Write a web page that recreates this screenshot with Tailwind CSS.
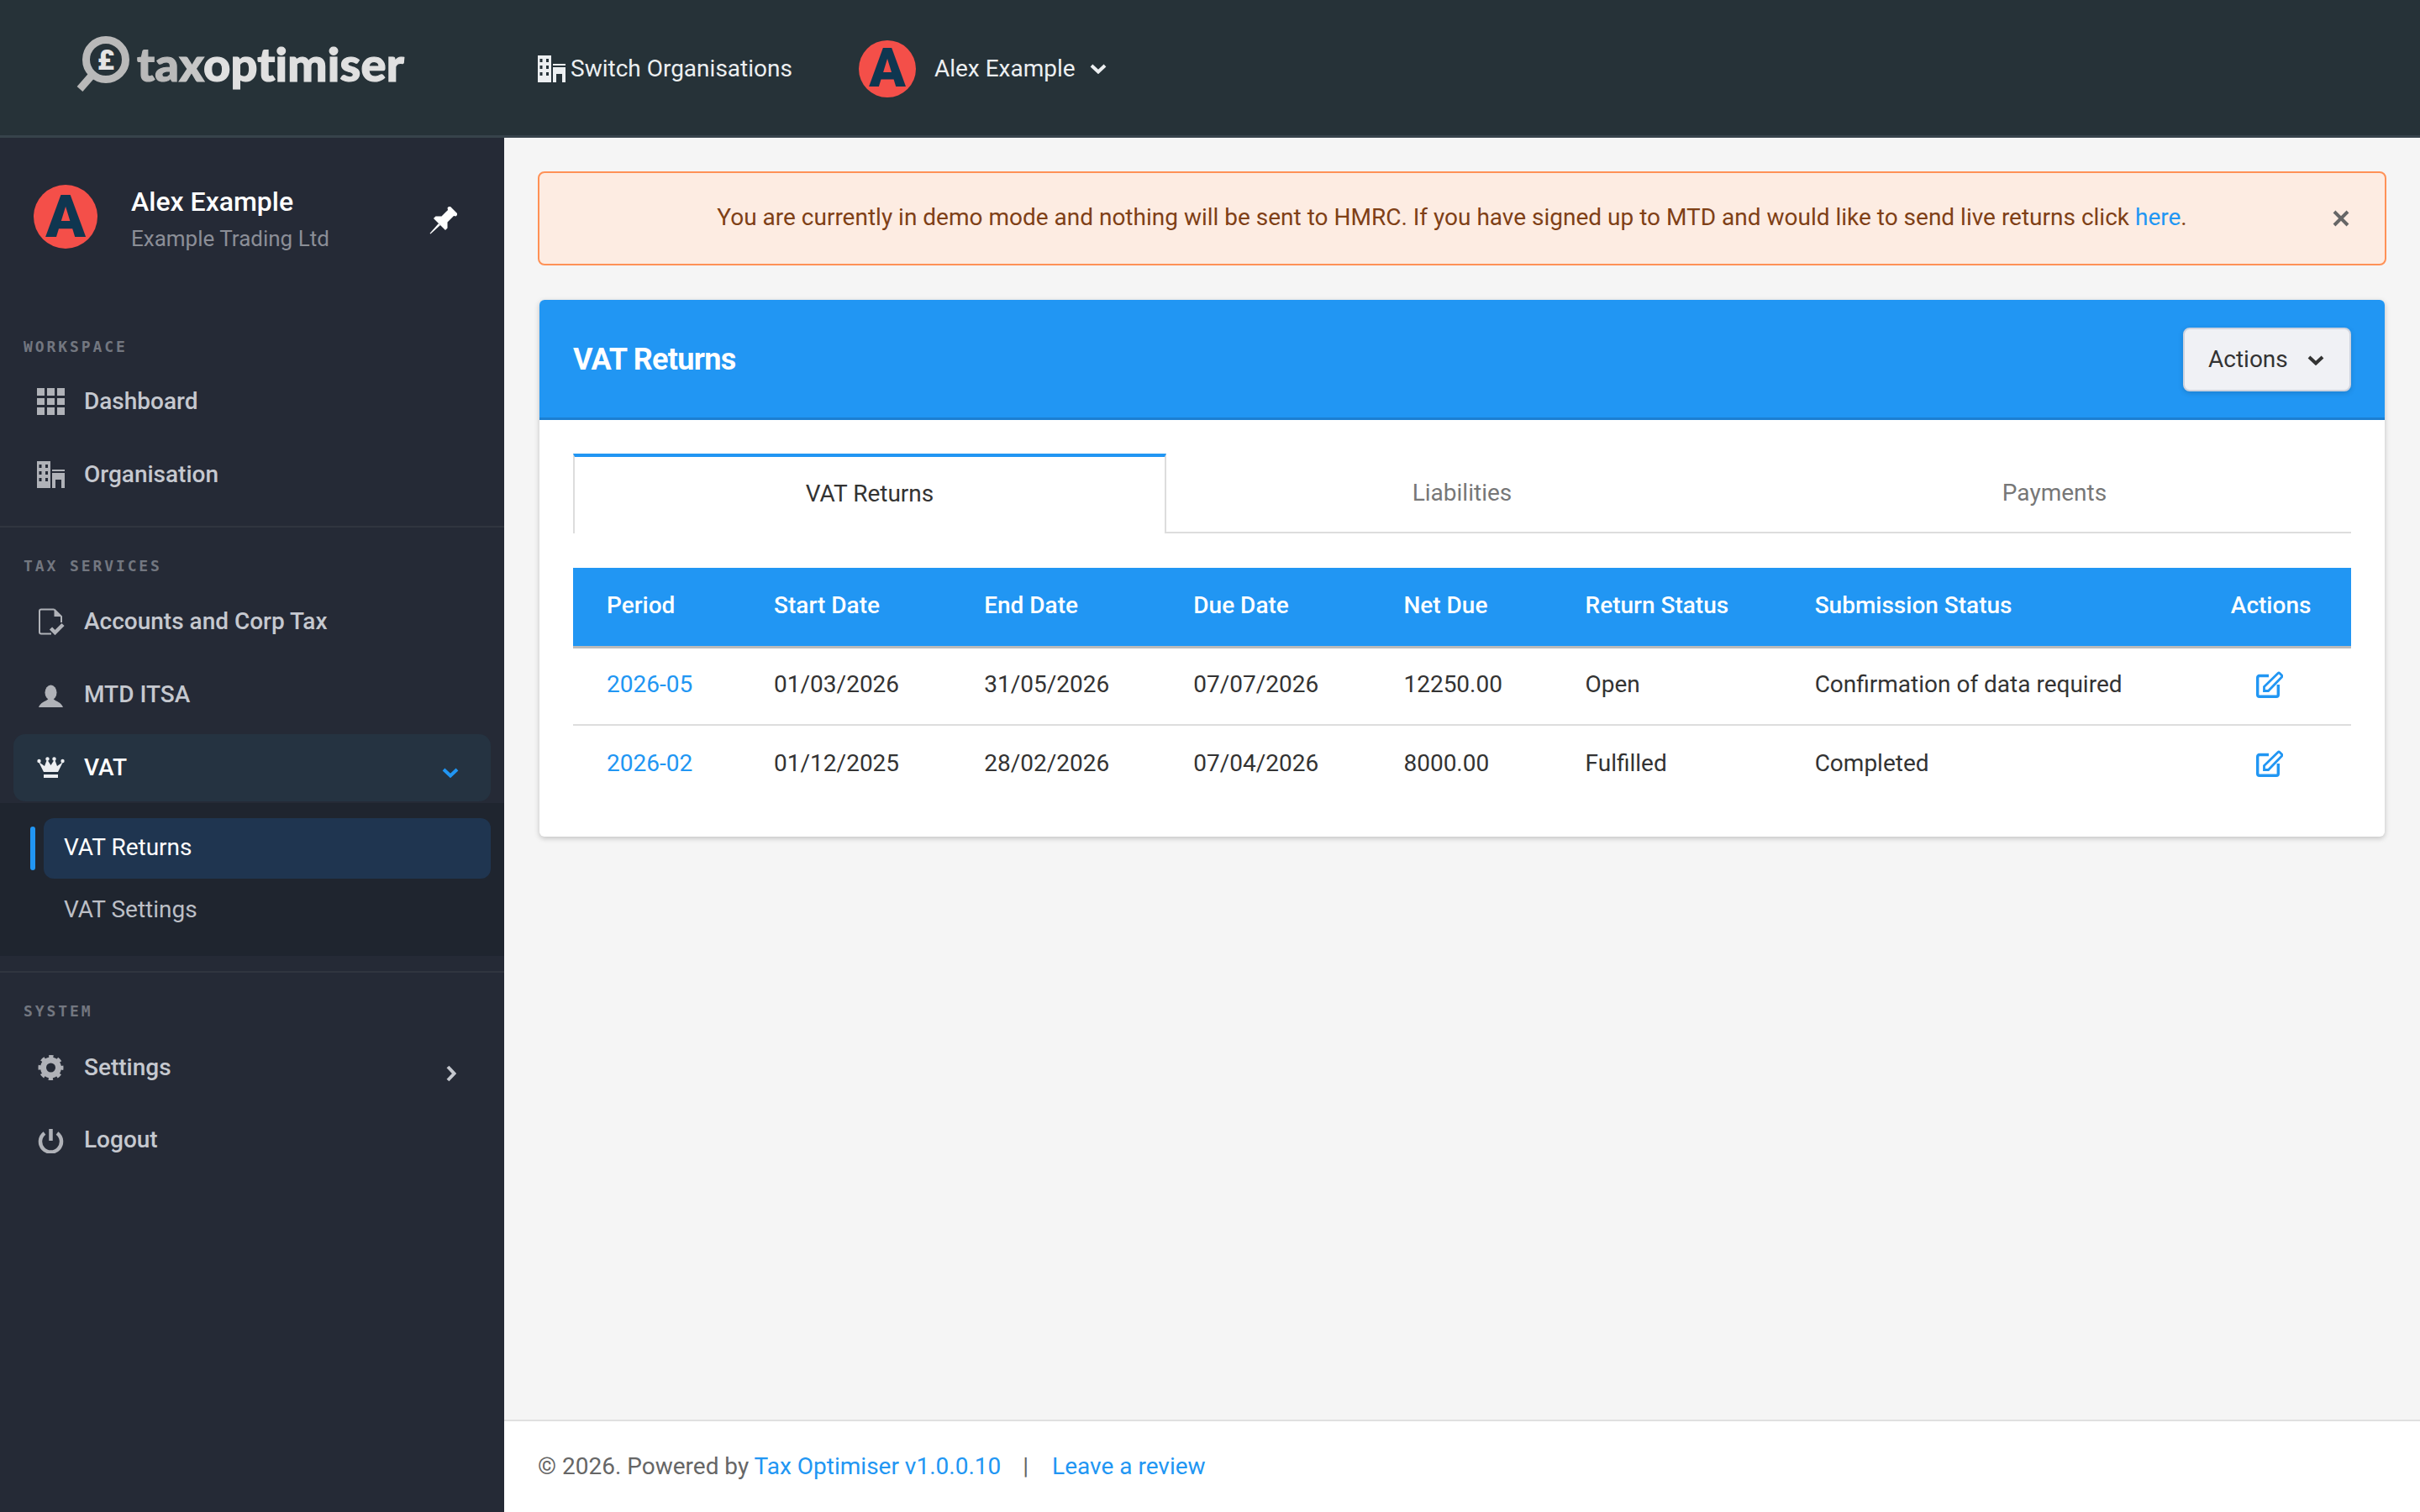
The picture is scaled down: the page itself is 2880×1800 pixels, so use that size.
<!DOCTYPE html>
<html lang="en">
<head>
  <meta charset="UTF-8">
  <title>VAT Returns - Tax Optimiser</title>
  <script src="https://cdn.jsdelivr.net/npm/@tailwindcss/browser@4"></script>
</head>
<body class="font-['Roboto',sans-serif] text-[28px] bg-[#f5f5f5] text-[#333]">
<div class="flex flex-col h-[1800px] w-[2880px] overflow-hidden">

  <!-- top bar -->
  <header class="flex items-center h-[164px] shrink-0 bg-[#263238] border-b-[3px] border-[#37434b] pt-[2px]">
    <div class="flex items-center w-[640px] pl-[90px] -mt-[12px] shrink-0">
      <svg width="64" height="66" viewBox="0 0 64 66" class="shrink-0">
        <circle cx="36" cy="28" r="23.500" fill="none" stroke="#b9b9b9" stroke-width="9"/>
        <path d="M19 47 L5 63" stroke="#b9b9b9" stroke-width="9" fill="none"/>
        <text x="36" y="40" text-anchor="middle" font-family="Roboto" font-weight="900" font-size="34" fill="#e4e4e4">£</text>
      </svg>
      <span class="ml-[9px] font-['Lato',sans-serif] font-black text-[56px] leading-none tracking-[0.2px] [-webkit-text-stroke:1.2px_currentColor] text-[#e0e0e0]"><span class="text-[#b9b9b9]">ta</span><span class="text-[#c6c6c6]">x</span>optimiser</span>
    </div>
    <a class="flex items-center text-[#eceff1]">
      <svg width="33" height="32" viewBox="0 0 33 32" fill="#eceff1" fill-rule="evenodd"><path d="M0 0H16V32H0Z M2.500 4V8H5.500V4Z M10 4V8H13V4Z M2.500 12V16H5.500V12Z M10 12V16H13V12Z M2.500 20V24H5.500V20Z M10 20V24H13V20Z"/><path d="M18 10H33V12H18Z M18 14H33V32H29V22H22V32H18Z"/></svg>
      <span class="ml-[6px]">Switch Organisations</span>
    </a>
    <a class="flex items-center ml-[79px] text-[#eceff1]">
      <span class="flex items-center justify-center w-[68px] h-[68px] rounded-full bg-[#f44f49] text-[#0f3650] font-black text-[64px] leading-none">A</span>
      <span class="ml-[22px]">Alex Example</span>
      <svg width="20" height="12" viewBox="0 0 20 12" class="ml-[17px]" fill="none" stroke="#eceff1" stroke-width="4"><path d="M2 2 L10 9.500 L18 2"/></svg>
    </a>
  </header>

  <div class="flex flex-1 min-h-0">
    <!-- sidebar -->
    <aside class="w-[600px] shrink-0 bg-[#252a36] flex flex-col">
      <div class="flex items-start h-[238px] pt-[56px] pl-[40px] shrink-0">
        <span class="flex items-center justify-center w-[76px] h-[76px] rounded-full bg-[#f44f49] text-[#0f3650] font-black text-[70px] leading-none shrink-0">A</span>
        <div class="ml-[40px] w-[354px]">
          <div class="text-[32px] leading-[40px] font-medium text-white">Alex Example</div>
          <div class="text-[26px] leading-[32px] mt-[8px] text-[#8b8e97]">Example Trading Ltd</div>
        </div>
        <svg width="34" height="34" viewBox="0 0 24 24" fill="#fff" class="mt-[26px]"><g transform="rotate(45 12 12)"><path d="M7 -1H17V1.500L15.500 2.500V10L19 13.500V16H5V13.500L8.500 10V2.500L7 1.500Z"/><path d="M11 16H13L12.400 27H11.600Z"/></g></svg>
      </div>

      <div class="pl-[28px] h-[20px] leading-[22px] mb-[16px] font-['DejaVu_Sans_Mono',monospace] font-bold text-[18px] tracking-[2.900px] text-[#737780]">WORKSPACE</div>
      <nav class="flex flex-col gap-[7px] mx-[16px]">
        <a class="flex items-center h-[80px] pl-[28px] font-medium text-[#c5c8cf]">
          <svg width="33" height="32" viewBox="0 0 33 32" fill="#b0b2b8" class="mr-[23px]"><path d="M0 0H9V9H0Z M12 0H21V9H12Z M24 0H33V9H24Z M0 12H9V20H0Z M12 12H21V20H12Z M24 12H33V20H24Z M0 23H9V32H0Z M12 23H21V32H12Z M24 23H33V32H24Z"/></svg>
          Dashboard
        </a>
        <a class="flex items-center h-[80px] pl-[28px] font-medium text-[#c5c8cf]">
          <svg width="33" height="32" viewBox="0 0 33 32" fill="#b0b2b8" fill-rule="evenodd" class="mr-[23px]"><path d="M0 0H16V32H0Z M2.500 4V8H5.500V4Z M10 4V8H13V4Z M2.500 12V16H5.500V12Z M10 12V16H13V12Z M2.500 20V24H5.500V20Z M10 20V24H13V20Z"/><path d="M18 10H33V12H18Z M18 14H33V32H29V22H22V32H18Z"/></svg>
          Organisation
        </a>
      </nav>
      <div class="h-[2px] mt-[21px] bg-[#30353f]"></div>

      <div class="pl-[28px] h-[20px] leading-[22px] mt-[35px] mb-[17px] font-['DejaVu_Sans_Mono',monospace] font-bold text-[18px] tracking-[2.900px] text-[#737780]">TAX SERVICES</div>
      <nav class="flex flex-col gap-[7px] mx-[16px]">
        <a class="flex items-center h-[80px] pl-[28px] font-medium text-[#c5c8cf]">
          <svg width="33" height="32" viewBox="0 0 33 32" class="mr-[23px]" fill="none"><path d="M20.500 1.500H5Q3 1.500 3 3.500V28.500Q3 30.500 5 30.500H17 M20.500 1.500L29 10V17" stroke="#b0b2b8" stroke-width="2"/><path d="M20.500 2V10H29Z" fill="#b0b2b8"/><path d="M16.500 24L21.500 29L31 19.500" stroke="#b0b2b8" stroke-width="4.500"/></svg>
          Accounts and Corp Tax
        </a>
        <a class="flex items-center h-[80px] pl-[28px] font-medium text-[#c5c8cf]">
          <svg width="33" height="32" viewBox="0 0 33 32" fill="#b0b2b8" class="mr-[23px]"><ellipse cx="16.500" cy="13.500" rx="7" ry="9"/><path d="M2 31C4 25 10 24.500 13.500 21H19.500C23 24.500 29 25 31 31Z"/></svg>
          MTD ITSA
        </a>
        <a class="flex items-center h-[80px] pl-[28px] pr-[38px] rounded-[14px] bg-[#253341] font-medium text-white">
          <svg width="33" height="32" viewBox="0 0 33 32" fill="#eceef1" class="mr-[23px]"><path d="M2 9L8 21H25L31 9L24 14L21 6L16.500 13L12 6L9 14Z"/><circle cx="2.500" cy="8" r="2.200"/><circle cx="12.500" cy="5.500" r="2.200"/><circle cx="20.500" cy="5.500" r="2.200"/><circle cx="30.500" cy="8" r="2.200"/><path d="M8 24H25V28H8Z"/></svg>
          VAT
          <svg width="20" height="12" viewBox="0 0 20 12" class="ml-auto mt-[12px]" fill="none" stroke="#2196f3" stroke-width="4"><path d="M2 2 L10 9.500 L18 2"/></svg>
        </a>
      </nav>
      <div class="mt-[2px] h-[182px] bg-[#1f252f] pt-[18px] pr-[16px] relative">
        <span class="absolute left-[36px] top-[28px] w-[6px] h-[52px] rounded-[3px] bg-[#2196f3]"></span>
        <a class="flex items-center h-[72px] ml-[52px] pl-[24px] pb-[2px] rounded-[12px] bg-[#1f3550] text-white">VAT Returns</a>
        <a class="flex items-center h-[72px] mt-[1px] ml-[52px] pl-[24px] text-[#bcbfc6]">VAT Settings</a>
      </div>
      <div class="h-[2px] mt-[18px] bg-[#30353f]"></div>

      <div class="pl-[28px] h-[20px] leading-[22px] mt-[35px] mb-[18px] font-['DejaVu_Sans_Mono',monospace] font-bold text-[18px] tracking-[2.900px] text-[#737780]">SYSTEM</div>
      <nav class="flex flex-col gap-[6px] mx-[16px]">
        <a class="flex items-center h-[80px] pl-[28px] pr-[38px] font-medium text-[#c5c8cf]">
          <svg width="33" height="32" viewBox="0 0 33 32" fill="none" stroke="#b0b2b8" class="mr-[23px]"><circle cx="16.500" cy="16" r="9" stroke-width="7"/><circle cx="16.500" cy="16" r="13" stroke-width="4" stroke-dasharray="5.200 5" stroke-dashoffset="2.600"/></svg>
          Settings
          <svg width="12" height="20" viewBox="0 0 12 20" class="ml-auto mr-[3px] mt-[13px]" fill="none" stroke="#c5c8cf" stroke-width="4"><path d="M2 2 L9.500 10 L2 18"/></svg>
        </a>
        <a class="flex items-center h-[80px] pl-[28px] font-medium text-[#c5c8cf]">
          <svg width="33" height="32" viewBox="0 0 33 32" fill="none" stroke="#b0b2b8" stroke-width="4.500" class="mr-[23px]"><path d="M9 8A12.500 12.500 0 1 0 24 8"/><path d="M16.500 3V17"/></svg>
          Logout
        </a>
      </nav>
    </aside>

    <!-- main -->
    <main class="flex-1 flex flex-col min-w-0">
      <div class="flex-1 pt-[40px] px-[40px]">
        <div class="flex items-center h-[112px] rounded-[8px] border-2 border-[#ff9156] bg-[#fdece2] text-[#7f4016] pr-[42px] pb-[3px]">
          <p class="flex-1 text-center pl-[38px]">You are currently in demo mode and nothing will be sent to HMRC. If you have signed up to MTD and would like to send live returns click <a class="text-[#2196f3]">here</a>.</p>
          <svg width="20" height="20" viewBox="0 0 20 20" fill="none" stroke="#666" stroke-width="4" class="mt-[3px]"><path d="M2 2L18 18M18 2L2 18"/></svg>
        </div>

        <section class="mt-[41px] mx-[2px] bg-white rounded-[6px] shadow-[0_2px_6px_rgba(0,0,0,0.22)] overflow-hidden">
          <div class="flex items-center justify-between h-[143px] px-[40px] bg-[#2196f3] border-b-[3px] border-[#1c7fd1] pt-[2px]">
            <h1 class="text-[36px] font-bold text-white tracking-[-0.700px]">VAT Returns</h1>
            <button class="flex items-center h-[76px] w-[200px] pl-[28px] rounded-[8px] border-2 border-[#cfd3de] bg-[#f0f1f5] text-[#333] shadow-[0_2px_6px_rgba(0,0,0,0.15)]">
              Actions
              <svg width="20" height="12" viewBox="0 0 20 12" class="ml-[23px] mt-[2px]" fill="none" stroke="#333" stroke-width="4"><path d="M2 2 L10 9.500 L18 2"/></svg>
            </button>
          </div>

          <div class="px-[40px] pt-[40px] pb-[40px]">
            <div class="flex h-[95px]">
              <div class="flex items-center justify-center w-[706px] pb-[4px] border-t-4 border-x-2 border-t-[#2196f3] border-x-[#ddd] text-[#333]">VAT Returns</div>
              <div class="flex items-center justify-center w-[704px] border-b-2 border-[#ddd] text-[#777]">Liabilities</div>
              <div class="flex items-center justify-center flex-1 border-b-2 border-[#ddd] text-[#777]">Payments</div>
            </div>

            <table class="mt-[41px] w-full table-fixed border-collapse text-left">
              <colgroup>
                <col class="w-[199px]"><col class="w-[250px]"><col class="w-[249px]"><col class="w-[250px]"><col class="w-[216px]"><col class="w-[273px]"><col class="w-[495px]"><col class="w-[183px]">
              </colgroup>
              <thead class="bg-[#2196f3] text-white">
                <tr class="h-[94px] border-b-[3px] border-[#bbb] [&>th]:pb-[3px]">
                  <th class="pl-[40px] font-medium">Period</th>
                  <th class="pl-[40px] font-medium">Start Date</th>
                  <th class="pl-[40px] font-medium">End Date</th>
                  <th class="pl-[40px] font-medium">Due Date</th>
                  <th class="pl-[40px] font-medium">Net Due</th>
                  <th class="pl-[40px] font-medium">Return Status</th>
                  <th class="pl-[40px] font-medium">Submission Status</th>
                  <th class="pl-[40px] pr-[51px] font-medium text-center">Actions</th>
                </tr>
              </thead>
              <tbody>
                <tr class="h-[93px] border-b-2 border-[#ddd] [&>td]:pb-[3px]">
                  <td class="pl-[40px]"><a class="text-[#2196f3]">2026-05</a></td>
                  <td class="pl-[40px]">01/03/2026</td>
                  <td class="pl-[40px]">31/05/2026</td>
                  <td class="pl-[40px]">07/07/2026</td>
                  <td class="pl-[40px]">12250.00</td>
                  <td class="pl-[40px]">Open</td>
                  <td class="pl-[40px]">Confirmation of data required</td>
                  <td class="pl-[40px] pr-[51px]"><svg width="32" height="32" viewBox="0 0 32 32" fill="none" stroke="#2196f3" stroke-width="3.400" class="mx-auto"><path d="M15 5.500H4Q1.700 5.500 1.700 8V28Q1.700 30.300 4 30.300H24Q26.300 30.300 26.300 28V16"/><path d="M9.500 23.500V18.500L26 2.500Q27 1.500 28 2.500L30.500 5Q31.500 6 30.500 7L14.500 23.500Z" stroke-width="2.800"/></svg></td>
                </tr>
                <tr class="h-[93px] [&>td]:pb-[3px]">
                  <td class="pl-[40px]"><a class="text-[#2196f3]">2026-02</a></td>
                  <td class="pl-[40px]">01/12/2025</td>
                  <td class="pl-[40px]">28/02/2026</td>
                  <td class="pl-[40px]">07/04/2026</td>
                  <td class="pl-[40px]">8000.00</td>
                  <td class="pl-[40px]">Fulfilled</td>
                  <td class="pl-[40px]">Completed</td>
                  <td class="pl-[40px] pr-[51px]"><svg width="32" height="32" viewBox="0 0 32 32" fill="none" stroke="#2196f3" stroke-width="3.400" class="mx-auto"><path d="M15 5.500H4Q1.700 5.500 1.700 8V28Q1.700 30.300 4 30.300H24Q26.300 30.300 26.300 28V16"/><path d="M9.500 23.500V18.500L26 2.500Q27 1.500 28 2.500L30.500 5Q31.500 6 30.500 7L14.500 23.500Z" stroke-width="2.800"/></svg></td>
                </tr>
              </tbody>
            </table>
          </div>
        </section>
      </div>

      <footer class="flex items-center h-[110px] shrink-0 px-[40px] pb-[1px] bg-white border-t-2 border-[#e0e0e0] text-[#666]">
        <span>© 2026. Powered by <a class="text-[#2196f3]">Tax Optimiser v1.0.0.10</a></span>
        <span class="ml-[26px]">|</span>
        <a class="ml-[28px] text-[#2196f3]">Leave a review</a>
      </footer>
    </main>
  </div>
</div>
</body>
</html>
